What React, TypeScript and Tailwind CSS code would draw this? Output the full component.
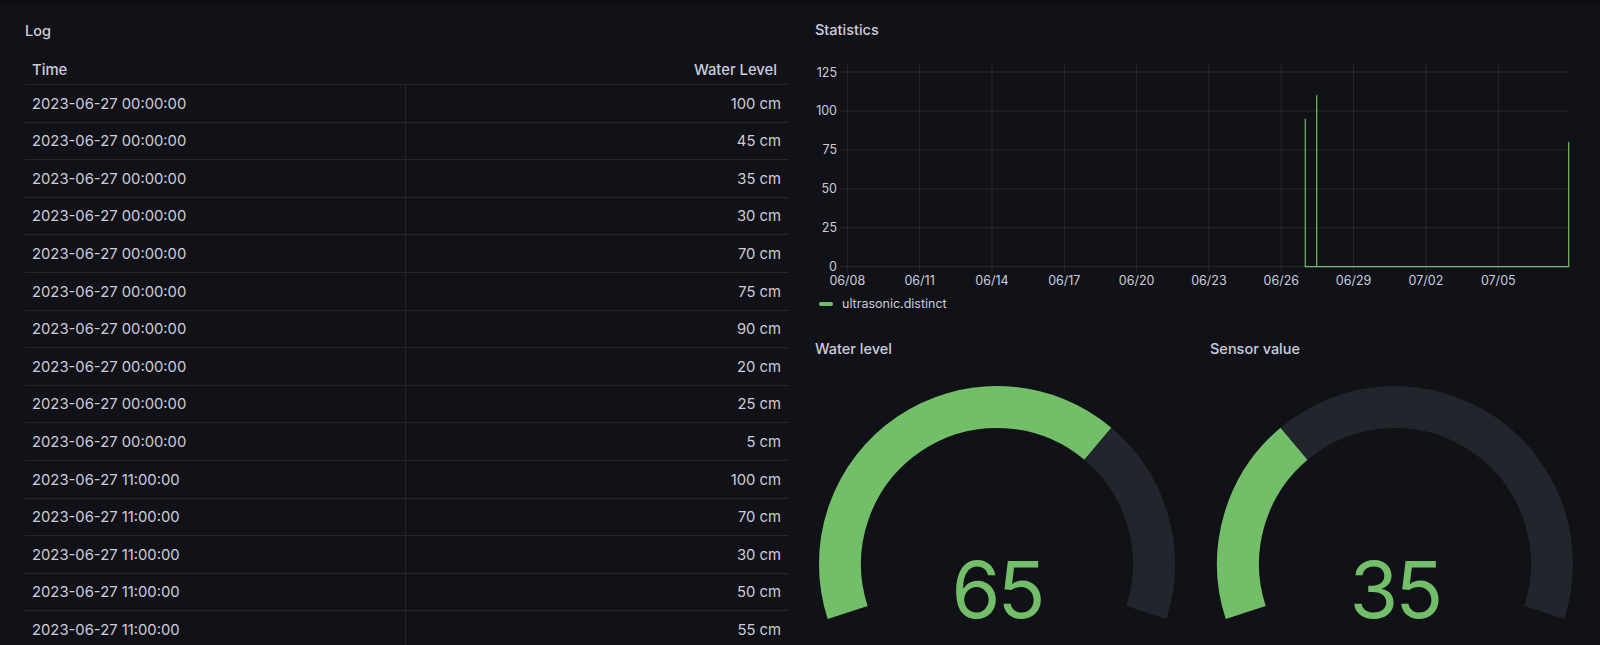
import React from 'react';

const rows = [
  { time: '2023-06-27 00:00:00', level: 100 },
  { time: '2023-06-27 00:00:00', level: 45 },
  { time: '2023-06-27 00:00:00', level: 35 },
  { time: '2023-06-27 00:00:00', level: 30 },
  { time: '2023-06-27 00:00:00', level: 70 },
  { time: '2023-06-27 00:00:00', level: 75 },
  { time: '2023-06-27 00:00:00', level: 90 },
  { time: '2023-06-27 00:00:00', level: 20 },
  { time: '2023-06-27 00:00:00', level: 25 },
  { time: '2023-06-27 00:00:00', level: 5 },
  { time: '2023-06-27 11:00:00', level: 100 },
  { time: '2023-06-27 11:00:00', level: 70 },
  { time: '2023-06-27 11:00:00', level: 30 },
  { time: '2023-06-27 11:00:00', level: 50 },
  { time: '2023-06-27 11:00:00', level: 55 },
];

const GREEN = '#73bf69';
const font = { fontFamily: 'Inter, "Noto Sans", sans-serif' };

const LogTable = () => (
  <div className="w-[790px] pl-[25px] pr-[2px] pt-[15px] overflow-hidden">
    <div className="h-[20px] flex items-center text-[14.5px] font-medium text-[#ccccdc]">Log</div>
    <div className="mt-[16px] text-[14.8px] text-[#ccccdc]">
      <div className="h-[28px] flex items-center justify-between border-b border-[#24262c] pl-[7px] pr-[11px] font-medium">
        <span>Time</span>
        <span>Water Level</span>
      </div>
      {rows.map((r, i) => (
        <div key={i} className="h-[37.6px] grid grid-cols-[381px_1fr] border-b border-[#24262c]">
          <div className="flex items-center pl-[7px] pt-[1px] border-r border-[#24262c]">{r.time}</div>
          <div className="flex items-center justify-end pr-[7px] pt-[1px]">{r.level} cm</div>
        </div>
      ))}
    </div>
  </div>
);

const StatsChart = () => {
  const zeroY = 206.7;
  const unit = (206.7 - 12) / 125;
  const left = 57.3;
  const right = 779;
  const yTicks = [0, 25, 50, 75, 100, 125];
  const xLabels = ['06/08', '06/11', '06/14', '06/17', '06/20', '06/23', '06/26', '06/29', '07/02', '07/05'];
  const y = (v: number) => zeroY - v * unit;
  return (
    <svg width="800" height="232" className="block mt-[20px]" style={font}>
      {yTicks.map((t) => (
        <g key={t}>
          <line x1={50} x2={right} y1={y(t)} y2={y(t)} stroke="#ccccdc" strokeOpacity={0.12} />
          <text x={47} y={y(t)} textAnchor="end" dominantBaseline="central" fontSize="12.5" fill="#ccccdc">
            {t}
          </text>
        </g>
      ))}
      {xLabels.map((l, i) => {
        const x = left + i * 72.33;
        return (
          <g key={l}>
            <line x1={x} x2={x} y1={4} y2={zeroY + 4} stroke="#ccccdc" strokeOpacity={0.12} />
            <text x={x} y={220} textAnchor="middle" dominantBaseline="central" fontSize="12.5" fill="#ccccdc">
              {l}
            </text>
          </g>
        );
      })}
      <path
        d={`M515.3 ${y(95)} V${zeroY} H526.7 V${y(110)} V${zeroY} H778.7 V${y(80)}`}
        fill="none"
        stroke={GREEN}
        strokeWidth={1.2}
      />
    </svg>
  );
};

const polar = (cx: number, cy: number, r: number, deg: number) => {
  const a = (deg * Math.PI) / 180;
  return [cx + r * Math.sin(a), cy - r * Math.cos(a)];
};

const arc = (cx: number, cy: number, r: number, from: number, to: number) => {
  const [x1, y1] = polar(cx, cy, r, from);
  const [x2, y2] = polar(cx, cy, r, to);
  const large = to - from > 180 ? 1 : 0;
  return `M${x1} ${y1} A${r} ${r} 0 ${large} 1 ${x2} ${y2}`;
};

const Gauge = ({ value, split }: { value: number; split: number }) => {
  const cx = 180;
  const cy = 183;
  const r = 157;
  return (
    <svg width="360" height="262" className="block" style={font}>
      <path d={arc(cx, cy, r, -108, split)} fill="none" stroke={GREEN} strokeWidth={42} />
      <path d={arc(cx, cy, r, split, 108)} fill="none" stroke="#22252b" strokeWidth={42} />
      <text x={cx} y={237} textAnchor="middle" fontSize="79" letterSpacing="-3" fill={GREEN}>
        {value}
      </text>
    </svg>
  );
};

const App = () => {
  return (
    <div className="w-[1600px] h-[645px] bg-[#111217] overflow-hidden flex flex-col" style={font}>
      <div className="h-[6px] shrink-0 bg-gradient-to-b from-[#0a0b0d] to-[#111217]" />
      <div className="flex flex-1 min-h-0">
        <LogTable />
        <div className="flex-1 flex flex-col">
          <div className="pl-[25px] pt-[14px]">
            <div className="h-[20px] flex items-center text-[14.5px] font-medium text-[#ccccdc]">Statistics</div>
          </div>
          <StatsChart />
          <div className="flex items-center gap-[9px] pl-[29px] mt-[5px] h-[14px]">
            <span className="w-[14px] h-[4px] rounded-full bg-[#73bf69]" />
            <span className="text-[12.5px] text-[#ccccdc]">ultrasonic.distinct</span>
          </div>
          <div className="flex mt-[28px]">
            <div className="w-[400px]">
              <div className="pl-[25px] h-[20px] flex items-center text-[14.5px] font-medium text-[#ccccdc]">Water level</div>
              <div className="ml-[27px] mt-[22px]">
                <Gauge value={65} split={40} />
              </div>
            </div>
            <div className="flex-1">
              <div className="pl-[20px] h-[20px] flex items-center text-[14.5px] font-medium text-[#ccccdc]">Sensor value</div>
              <div className="ml-[25px] mt-[22px]">
                <Gauge value={35} split={-40} />
              </div>
            </div>
          </div>
        </div>
      </div>
    </div>
  );
};

export default App;
